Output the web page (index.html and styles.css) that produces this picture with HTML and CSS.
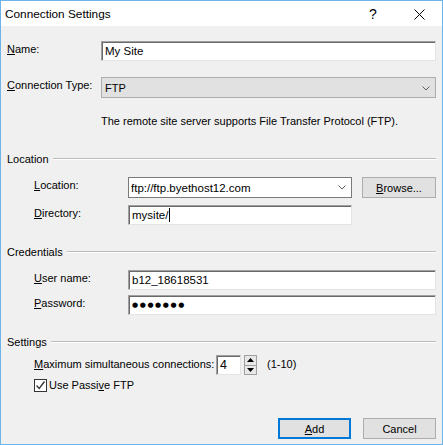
FILE: index.html
```html
<!DOCTYPE html>
<html>
<head>
<meta charset="utf-8">
<link rel="stylesheet" href="styles.css">
</head>
<body>
<div class="window">
  <div class="titlebar">
    <span class="title">Connection Settings</span>
    <span class="cap help">?</span>
    <span class="cap close"><svg width="11" height="11" viewBox="0 0 11 11"><path d="M0.5 0.5L10.5 10.5M10.5 0.5L0.5 10.5" stroke="#000" stroke-width="1" fill="none"/></svg></span>
  </div>
  <div class="content">
    <div class="row r-name">
      <span class="lbl"><u>N</u>ame:</span>
      <div class="edit grow">My Site</div>
    </div>
    <div class="row r-type">
      <span class="lbl"><u>C</u>onnection Type:</span>
      <div class="dropdown grow"><span>FTP</span><svg class="chev" width="8" height="5" viewBox="0 0 8 5"><path d="M0.5 0.5L4 4L7.5 0.5" stroke="#606060" fill="none"/></svg></div>
    </div>
    <p class="desc">The remote site server supports File Transfer Protocol (FTP).</p>

    <div class="group g-loc"><span>Location</span><span class="line"></span></div>
    <div class="indent">
      <div class="row r-loc">
        <span class="lbl"><u>L</u>ocation:</span>
        <div class="combo"><span>ftp://ftp.byethost12.com</span><svg class="chev" width="8" height="5" viewBox="0 0 8 5"><path d="M0.5 0.5L4 4L7.5 0.5" stroke="#606060" fill="none"/></svg></div>
        <button class="btn browse"><u>B</u>rowse...</button>
      </div>
      <div class="row r-dir">
        <span class="lbl"><u>D</u>irectory:</span>
        <div class="edit dir">mysite/<span class="caret"></span></div>
      </div>
    </div>

    <div class="group g-cred"><span>Credentials</span><span class="line"></span></div>
    <div class="indent">
      <div class="row r-user">
        <span class="lbl"><u>U</u>ser name:</span>
        <div class="edit grow">b12_18618531</div>
      </div>
      <div class="row r-pass">
        <span class="lbl"><u>P</u>assword:</span>
        <div class="edit grow pass">●●●●●●●</div>
      </div>
    </div>

    <div class="group g-set"><span>Settings</span><span class="line"></span></div>
    <div class="indent">
      <div class="row r-spin">
        <span class="lbl wide"><u>M</u>aximum simultaneous connections:</span>
        <div class="edit spinval">4</div>
        <div class="spin">
          <span class="sb"><svg width="7" height="4" viewBox="0 0 7 4"><path d="M3.5 0L7 4H0Z" fill="#000"/></svg></span>
          <span class="sb"><svg width="7" height="4" viewBox="0 0 7 4"><path d="M0 0H7L3.5 4Z" fill="#000"/></svg></span>
        </div>
        <span class="range">(1-10)</span>
      </div>
      <div class="row r-chk">
        <span class="check"><svg width="11" height="11" viewBox="0 0 11 11"><path d="M1.5 5.5L4.2 8.5L9.5 1.5" stroke="#333" stroke-width="1.3" fill="none"/></svg></span>
        <span class="chklbl">Use Passi<u>v</u>e FTP</span>
      </div>
    </div>

    <div class="buttons">
      <button class="btn default"><u>A</u>dd</button>
      <button class="btn">Cancel</button>
    </div>
  </div>
</div>
</body>
</html>
```

FILE: styles.css
```css
* { box-sizing: border-box; margin: 0; padding: 0; }
html, body { margin: 0; background: #f0f0f0; }
body {
  font-family: "Liberation Sans", Arial, sans-serif;
  font-size: 11px;
  color: #000;
}
.window {
  width: 443px;
  height: 445px;
  border: 1px solid #6cb4e9;
  background: #f0f0f0;
  display: flex;
  flex-direction: column;
  overflow: hidden;
}
.titlebar {
  height: 25px;
  flex: none;
  background: #fff;
  display: flex;
  align-items: center;
}
.title {
  flex: 1;
  padding-left: 4px;
  font-size: 11.8px;
  padding-top: 1px;
}
.cap {
  width: 46px;
  height: 25px;
  display: flex;
  align-items: center;
  justify-content: center;
}
.help { font-size: 14px; padding-top: 1px; }
.close svg { display: block; margin-top: 1px; }

.content { padding: 0 6px; }
.row { display: flex; align-items: flex-start; }
.lbl { width: 94px; flex: none; line-height: 16px; white-space: nowrap; }
.lbl.wide { width: 182px; margin-top: 1px; }
.grow { flex: 1; }
u { text-decoration: underline; text-underline-offset: 1px; }

.edit {
  height: 20px;
  background: #fff;
  border: 1px solid;
  border-color: #a0a0a0 #e3e3e3 #e3e3e3 #a0a0a0;
  box-shadow: inset 1px 1px 0 #696969;
  padding-left: 3px;
  line-height: 18px;
  white-space: nowrap;
  display: flex;
  align-items: center;
  font-size: 11.5px;
}
.caret { display: inline-block; width: 1px; height: 14px; background: #000; margin-left: 1px; }

.r-name { margin-top: 15px; }
.r-type { margin-top: 16px; }
.dropdown {
  height: 21px;
  background: #e1e1e1;
  border: 1px solid #adadad;
  display: flex;
  align-items: center;
  justify-content: space-between;
  padding: 0 5px 0 3px;
}
.dropdown .chev { margin-top: 1px; }
.desc { margin-top: 15px; margin-left: 94px; line-height: 16px; white-space: nowrap; }

.group { display: flex; align-items: center; line-height: 16px; }
.group .line { flex: 1; height: 1px; background: #bcbcbc; margin-left: 4px; margin-top: -2px; box-shadow: 0 1px 0 #fff; }
.g-loc { margin-top: 22px; }
.g-cred { margin-top: 19px; }
.g-set { margin-top: 19px; }

.indent { padding-left: 27px; }
.r-loc { margin-top: 10px; }
.combo {
  width: 224px;
  height: 21px;
  background: #fff;
  border: 1px solid #7a7a7a;
  display: flex;
  align-items: center;
  justify-content: space-between;
  padding: 0 5px 0 2px;
  white-space: nowrap;
  font-size: 11.5px;
}
.btn {
  font-family: inherit;
  font-size: 11px;
  color: #000;
  height: 21px;
  background: #e1e1e1;
  border: 1px solid #adadad;
  text-align: center;
  line-height: 18px;
  white-space: nowrap;
}
.browse { width: 74px; margin-left: 10px; flex: none; }
.r-dir { margin-top: 7px; }
.edit.dir { width: 224px; }

.r-user { margin-top: 10px; }
.r-pass { margin-top: 5px; }
.edit.pass { font-family: "DejaVu Sans", sans-serif; font-size: 7px; letter-spacing: 1.6px; padding-left: 3px; }

.r-spin { margin-top: 5px; align-items: flex-start; }
.edit.spinval { width: 25px; height: 20px; padding-left: 3px; font-size: 12.5px; flex: none; }
.spin {
  margin-left: 3px;
  width: 13px;
  height: 20px;
  border: 1px solid #a0a0a0;
  background: #f0f0f0;
  display: flex;
  flex-direction: column;
  flex: none;
}
.sb { flex: 1; display: flex; align-items: center; justify-content: center; background: #e8e8e8; }
.sb + .sb { border-top: 1px solid #a0a0a0; }
.sb svg { display: block; }
.range { margin-left: 10px; line-height: 16px; margin-top: 1px; white-space: nowrap; }

.r-chk { margin-top: 2px; align-items: center; height: 16px; }
.check {
  width: 13px;
  height: 13px;
  border: 1px solid #333;
  background: #fff;
  display: flex;
  align-items: center;
  justify-content: center;
  flex: none;
}
.check svg { display: block; }
.chklbl { margin-left: 2px; line-height: 16px; white-space: nowrap; }

.buttons { display: flex; justify-content: flex-end; gap: 12px; margin-top: 25px; }
.buttons .btn { width: 73px; }
.btn.default { border: 2px solid #0078d7; line-height: 16px; }
```
